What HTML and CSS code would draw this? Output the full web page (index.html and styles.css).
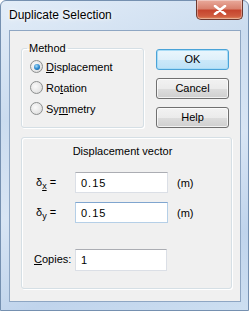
FILE: index.html
```html
<!DOCTYPE html>
<html>
<head>
<meta charset="utf-8">
<link rel="stylesheet" href="styles.css">
</head>
<body>
<div class="window">
  <div class="titlebar">
    <span class="title">Duplicate Selection</span>
    <div class="close">
      <svg width="14" height="10" viewBox="0 0 14 10"><path d="M2 1 L12 9 M12 1 L2 9" stroke="#fff" stroke-width="2.6" stroke-linecap="round"/></svg>
    </div>
  </div>
  <div class="client">
    <div class="top">
      <fieldset class="group method">
        <legend>Method</legend>
        <div class="radio-row"><span class="radio checked"></span><span><u>D</u>isplacement</span></div>
        <div class="radio-row"><span class="radio"></span><span>Ro<u>t</u>ation</span></div>
        <div class="radio-row"><span class="radio"></span><span>Sy<u>m</u>metry</span></div>
      </fieldset>
      <div class="buttons">
        <div class="btn default">OK</div>
        <div class="btn">Cancel</div>
        <div class="btn">Help</div>
      </div>
    </div>
    <div class="group vector">
      <div class="vtitle">Displacement vector</div>
      <div class="row">
        <span class="lbl">δ<sub><u>x</u></sub> =</span>
        <div class="field">0.15</div>
        <span class="unit">(m)</span>
      </div>
      <div class="row">
        <span class="lbl">δ<sub>y</sub> =</span>
        <div class="field focus">0.15</div>
        <span class="unit">(m)</span>
      </div>
      <div class="row copies">
        <span class="lbl"><u>C</u>opies:</span>
        <div class="field">1</div>
      </div>
    </div>
  </div>
</div>
</body>
</html>
```

FILE: styles.css
```css
* { box-sizing: border-box; }
html, body { margin: 0; padding: 0; }
body {
  width: 249px;
  height: 311px;
  overflow: hidden;
  font-family: "Liberation Sans", Arial, sans-serif;
  font-size: 11px;
  color: #000;
}
.window {
  width: 249px;
  height: 311px;
  padding: 0 7px 8px 8px;
  border: 1px solid #7590b0;
  border-radius: 6px 6px 0 0;
  background: linear-gradient(160deg, #e3edf8 0%, #cbdcef 30%, #d8e5f4 55%, #c0d4ec 80%, #cddff1 100%);
  display: flex;
  flex-direction: column;
}
.titlebar {
  height: 29px;
  display: flex;
  justify-content: space-between;
  align-items: flex-start;
}
.title {
  font-size: 12px;
  line-height: 15px;
  padding-top: 7px;
  color: #000;
  text-shadow: 0 0 6px #fff, 0 0 3px #fff;
}
.close {
  margin-top: -1px;
  margin-right: -2px;
  width: 47px;
  height: 20px;
  border: 1px solid #6d3a30;
  border-top: none;
  border-radius: 0 0 5px 5px;
  background: linear-gradient(#e9aa9c 0%, #d9826f 45%, #c6452e 55%, #cf5b3f 85%, #e08a5e 100%);
  box-shadow: inset 0 0 0 1px rgba(255,255,255,0.35);
  display: flex;
  align-items: center;
  justify-content: center;
}
.client {
  flex: 1;
  background: #f0f0f0;
  border: 1px solid #8ea6c3;
  padding: 11px 0 0 11px;
}
.top {
  display: flex;
  gap: 12px;
}
.group {
  border: 1px solid #d5dfe5;
  border-radius: 3px;
  margin: 0;
  box-shadow: 1px 1px 0 #fff inset, 1px 1px 0 #fff;
}
.method {
  width: 123px;
  height: 86px;
  padding: 1px 0 0 8px;
}
.method legend {
  margin-left: -3px;
  padding: 0 2px;
  line-height: 13px;
}
.radio-row {
  height: 21px;
  display: flex;
  align-items: center;
  gap: 3px;
}
.radio {
  width: 13px;
  height: 13px;
  border-radius: 50%;
  border: 1px solid #8c8f8f;
  background: radial-gradient(circle at 40% 40%, #fafafa 0%, #e6e6e6 60%, #cfcfcf 100%);
  display: flex;
  align-items: center;
  justify-content: center;
  flex: none;
}
.radio.checked::after {
  content: "";
  width: 6px;
  height: 6px;
  border-radius: 50%;
  background: radial-gradient(circle at 40% 35%, #a8dcf7 0%, #2d8ad0 50%, #0f4f8c 100%);
}
.buttons {
  margin-top: 7px;
  display: flex;
  flex-direction: column;
  gap: 8px;
}
.btn {
  width: 73px;
  height: 21px;
  border: 1px solid #707070;
  border-radius: 3px;
  background: linear-gradient(#f2f2f2 0%, #ebebeb 50%, #dddddd 51%, #cfcfcf 100%);
  box-shadow: inset 0 0 0 1px rgba(255,255,255,0.7);
  display: flex;
  align-items: center;
  justify-content: center;
  line-height: 13px;
}
.btn.default {
  border-color: #4aa3d8;
  background: linear-gradient(#eaf6fd 0%, #dff0fa 50%, #cbe8f9 51%, #bde2f7 100%);
  box-shadow: inset 0 0 0 1px #a9dcf6;
}
.vector {
  margin-top: 9px;
  width: 211px;
  height: 152px;
  padding: 7px 0 0 14px;
}
.vtitle {
  line-height: 13px;
  text-align: center;
  padding-right: 22px;
  margin-bottom: 14px;
}
.row {
  display: flex;
  align-items: center;
  height: 21px;
  margin-bottom: 9px;
}
.lbl {
  width: 39px;
  flex: none;
  line-height: 13px;
}
.lbl sub {
  font-size: 9px;
  line-height: 0;
  vertical-align: -3px;
}
.field {
  width: 93px;
  height: 21px;
  background: #fff;
  border: 1px solid #dbdfe6;
  border-top-color: #abadb3;
  padding-left: 5px;
  display: flex;
  align-items: center;
  letter-spacing: 1px;
  flex: none;
}
.field.focus {
  border-color: #b5cfe7;
  border-top-color: #7fa5cf;
}
.unit {
  margin-left: 9px;
}
.copies {
  margin-top: 26px;
}
.copies .lbl {
  margin-left: -2px;
  width: 41px;
}
.copies .field {
  width: 92px;
  height: 22px;
}
```
